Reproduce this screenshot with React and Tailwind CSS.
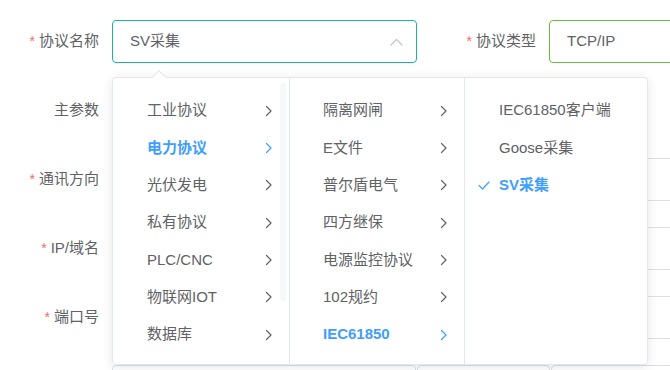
const Chevron = ({ className }) => (
  <svg className={className} width="8" height="12" viewBox="0 0 8 12" fill="none">
    <path d="M1.5 1.5L6 6l-4.5 4.5" stroke="currentColor" strokeWidth="1.2" strokeLinecap="round" strokeLinejoin="round" />
  </svg>
);

const Check = () => (
  <svg width="12" height="9" viewBox="0 0 12 9" fill="none">
    <path d="M1 4.5L4.5 8L11 1" stroke="#409eff" strokeWidth="1.2" strokeLinecap="round" strokeLinejoin="round" />
  </svg>
);

const Label = ({ text, required }) => (
  <div className="w-[112px] shrink-0 pr-[13px] flex items-center justify-end text-[15px] text-[#606266]">
    {required && <span className="text-[#f56c6c] mr-[4px] text-[14px]">*</span>}
    {text}
  </div>
);

const Box = ({ className = '', children }) => (
  <div className={`h-[43px] shrink-0 rounded-[4px] border bg-white flex items-center ${className}`}>{children}</div>
);

const col1 = ['工业协议', '电力协议', '光伏发电', '私有协议', 'PLC/CNC', '物联网IOT', '数据库'];
const col2 = ['隔离网闸', 'E文件', '普尔盾电气', '四方继保', '电源监控协议', '102规约', 'IEC61850'];
const col3 = ['IEC61850客户端', 'Goose采集', 'SV采集'];

export default function App() {
  return (
    <div className="relative w-[670px] h-[370px] overflow-hidden bg-white font-['Liberation_Sans','Noto_Sans_CJK_SC',sans-serif]">
      {/* form behind the dropdown */}
      <div className="pt-[20px] flex flex-col gap-[26px]">
        <div className="flex h-[43px]">
          <Label text="协议名称" required />
          <Box className="w-[305px] border-[#1cb39e] px-[17px] justify-between text-[15px] text-[#606266]">
            <span>SV采集</span>
            <svg width="13" height="8" viewBox="0 0 13 8" fill="none" className="mr-[-4px]">
              <path d="M1 7L6.5 1.5L12 7" stroke="#c0c4cc" strokeWidth="1.2" strokeLinecap="round" strokeLinejoin="round" />
            </svg>
          </Box>
          <div className="w-[20px] shrink-0" />
          <Label text="协议类型" required />
          <Box className="w-[200px] border-[#67c23a] px-[17px] text-[15px] text-[#606266]">TCP/IP</Box>
        </div>
        <div className="flex h-[43px]">
          <Label text="主参数" />
          <Box className="w-[305px] border-[#dcdfe6]" />
        </div>
        <div className="flex h-[43px]">
          <Label text="通讯方向" required />
          <Box className="w-[305px] border-[#dcdfe6]" />
          <div className="w-[20px] shrink-0" />
          <Label text="" />
          <Box className="w-[200px] border-[#dcdfe6]" />
        </div>
        <div className="flex h-[43px]">
          <Label text="IP/域名" required />
          <Box className="w-[305px] border-[#dcdfe6]" />
          <div className="w-[20px] shrink-0" />
          <Label text="" />
          <Box className="w-[200px] border-[#dcdfe6]" />
        </div>
        <div className="flex h-[43px]">
          <Label text="端口号" required />
          <Box className="w-[305px] border-[#dcdfe6]" />
          <div className="w-[20px] shrink-0" />
          <Label text="" />
          <Box className="w-[200px] border-[#dcdfe6]" />
        </div>
        <div className="flex h-[43px] gap-[1px] pl-[112px]">
          <Box className="w-[304px] border-[#dcdfe6]" />
          <Box className="w-[133px] border-[#dcdfe6]" />
          <Box className="w-[200px] border-[#dcdfe6]" />
        </div>
      </div>

      {/* cascader dropdown */}
      <div className="absolute left-[112px] top-[77px] w-[536px] h-[288px] bg-white border border-[#e4e7ed] rounded-[4px] shadow-[0_2px_12px_0_rgba(0,0,0,0.1)]">
        <div className="absolute left-[41px] top-[-6px] w-[10px] h-[10px] rotate-45 bg-white border-l border-t border-[#e4e7ed]" />
        <div className="relative flex h-full text-[15px] text-[#606266]">
          <div className="relative w-[177px] shrink-0 border-r border-[#e4e7ed] pt-[14px]">
            <div className="absolute left-[167px] top-[5px] w-[6px] h-[218px] rounded-[3px] bg-[#f7f8fa]" />
            {col1.map((t) => {
              const active = t === '电力协议';
              return (
                <div key={t} className={`relative h-[37.33px] pl-[34px] pr-[16px] flex items-center justify-between ${active ? 'text-[#409eff] font-bold' : ''}`}>
                  <span>{t}</span>
                  <Chevron />
                </div>
              );
            })}
          </div>
          <div className="w-[175px] shrink-0 border-r border-[#e4e7ed] pt-[14px]">
            {col2.map((t) => {
              const active = t === 'IEC61850';
              return (
                <div key={t} className={`h-[37.33px] pl-[33px] pr-[16px] flex items-center justify-between ${active ? 'text-[#409eff] font-bold' : ''}`}>
                  <span>{t}</span>
                  <Chevron />
                </div>
              );
            })}
          </div>
          <div className="flex-1 pt-[14px]">
            {col3.map((t) => {
              const active = t === 'SV采集';
              return (
                <div key={t} className={`relative h-[37.33px] pl-[34px] flex items-center ${active ? 'text-[#409eff] font-bold' : ''}`}>
                  {active && (
                    <span className="absolute left-[13px] top-[14px]">
                      <Check />
                    </span>
                  )}
                  <span>{t}</span>
                </div>
              );
            })}
          </div>
        </div>
      </div>
    </div>
  );
}
